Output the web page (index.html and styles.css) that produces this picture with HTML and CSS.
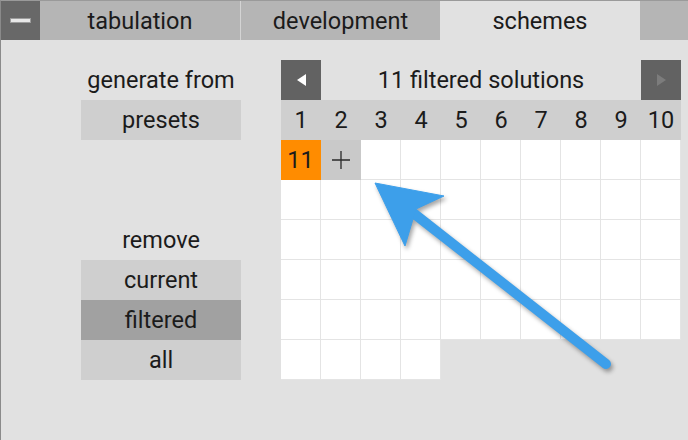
FILE: index.html
```html
<!DOCTYPE html>
<html lang="en">
<head>
    <meta charset="UTF-8">
    <meta name="viewport" content="width=device-width, initial-scale=1.0">
    <title>Schemes</title>
    <link rel="stylesheet" href="styles.css">
</head>
<body>
    <div class="page">
        <div class="tabs">
            <div class="menu"><span class="menu-bar"></span></div>
            <div class="tab">tabulation</div>
            <div class="tab sep">development</div>
            <div class="tab active">schemes</div>
            <div class="tab rest"></div>
        </div>
        <div class="content">
            <div class="side">
                <div class="label">generate from</div>
                <div class="btn">presets</div>
                <div class="spacer"></div>
                <div class="label">remove</div>
                <div class="btn">current</div>
                <div class="btn pressed">filtered</div>
                <div class="btn">all</div>
            </div>
            <div class="board">
                <div class="nav">
                    <div class="navbtn"><span class="tri left"></span></div>
                    <div class="title">11 filtered solutions</div>
                    <div class="navbtn"><span class="tri right"></span></div>
                </div>
                <div class="numbers">
                    <span>1</span><span>2</span><span>3</span><span>4</span><span>5</span>
                    <span>6</span><span>7</span><span>8</span><span>9</span><span>10</span>
                </div>
                <div class="grid" id="grid"></div>
            </div>
        </div>
        <svg class="pointer" width="688" height="440" viewBox="0 0 688 440">
            <g fill="#3d9fea" stroke="#3d9fea">
                <line x1="606" y1="364" x2="412" y2="212" stroke-width="10" stroke-linecap="round"/>
                <polygon points="375,183 444,196 416,209 405,246" stroke-width="1" stroke-linejoin="round"/>
            </g>
        </svg>
    </div>
    <script>
        let grid = document.getElementById('grid');
        let total = 54;
        for (let i = 0; i < total; i++) {
            let cell = document.createElement('div');
            cell.className = 'cell';
            if (i == 0) { cell.className += ' current'; cell.textContent = '11'; }
            if (i == 1) { cell.className += ' add'; cell.innerHTML = '<svg width="20" height="20" viewBox="0 0 20 20"><path d="M10 1V19M1 10H19" stroke="#2a2a2a" stroke-width="1.3"/></svg>'; }
            grid.appendChild(cell);
        }
    </script>
</body>
</html>
```

FILE: styles.css
```css
html, body {
    margin: 0;
    padding: 0;
}
body {
    font-family: Roboto, 'Liberation Sans', sans-serif;
    font-size: 23.5px;
    color: #1b1b1b;
}
.page {
    width: 688px;
    height: 440px;
    box-sizing: border-box;
    border-top: 1px solid #9a9a9a;
    border-left: 1px solid #8a8a8a;
    background-color: #e1e1e1;
    position: relative;
    overflow: hidden;
}
.tabs {
    display: flex;
    height: 39px;
}
.menu {
    width: 39px;
    background-color: #686868;
    display: flex;
    align-items: center;
    justify-content: center;
}
.menu-bar {
    width: 19px;
    height: 3px;
    background-color: #e8e8e8;
    border: 1px solid #9c9c9c;
}
.tab {
    width: 200px;
    background-color: #b5b5b5;
    display: flex;
    align-items: center;
    justify-content: center;
    box-sizing: border-box;
}
.tab.sep {
    border-left: 1px solid #d4d4d4;
}
.tab.active {
    background-color: #e1e1e1;
}
.tab.rest {
    width: 48px;
}
.content {
    display: flex;
    padding: 20px 0 0 80px;
    gap: 40px;
}
.side {
    width: 160px;
    display: flex;
    flex-direction: column;
}
.label, .btn {
    height: 40px;
    display: flex;
    align-items: center;
    justify-content: center;
}
.btn {
    background-color: #cfcfcf;
}
.btn.pressed {
    background-color: #a1a1a1;
}
.spacer {
    height: 80px;
}
.board {
    width: 400px;
}
.nav {
    display: flex;
    height: 40px;
}
.navbtn {
    width: 40px;
    background-color: #626262;
    display: flex;
    align-items: center;
    justify-content: center;
}
.tri {
    width: 0;
    height: 0;
    border-top: 6px solid transparent;
    border-bottom: 6px solid transparent;
}
.tri.left {
    border-right: 9px solid #ffffff;
}
.tri.right {
    border-left: 9px solid #7c7c7c;
}
.title {
    flex: 1;
    display: flex;
    align-items: center;
    justify-content: center;
}
.numbers {
    display: grid;
    grid-template-columns: repeat(10, 40px);
    height: 40px;
    background-color: #cfcfcf;
}
.numbers span {
    display: flex;
    align-items: center;
    justify-content: center;
}
.grid {
    display: grid;
    grid-template-columns: repeat(10, 40px);
    grid-auto-rows: 40px;
}
.cell {
    background-color: #ffffff;
    border-right: 1px solid #e4e4e4;
    border-bottom: 1px solid #e4e4e4;
    box-sizing: border-box;
    display: flex;
    align-items: center;
    justify-content: center;
}
.cell.current {
    background-color: #ff8c00;
    border-color: #ff8c00;
}
.cell.add {
    background-color: #c9c9c9;
    border-color: #c9c9c9;
}
.pointer {
    position: absolute;
    left: -1px;
    top: -1px;
    filter: drop-shadow(2px 3px 2px rgba(0, 0, 0, 0.35));
}
```
